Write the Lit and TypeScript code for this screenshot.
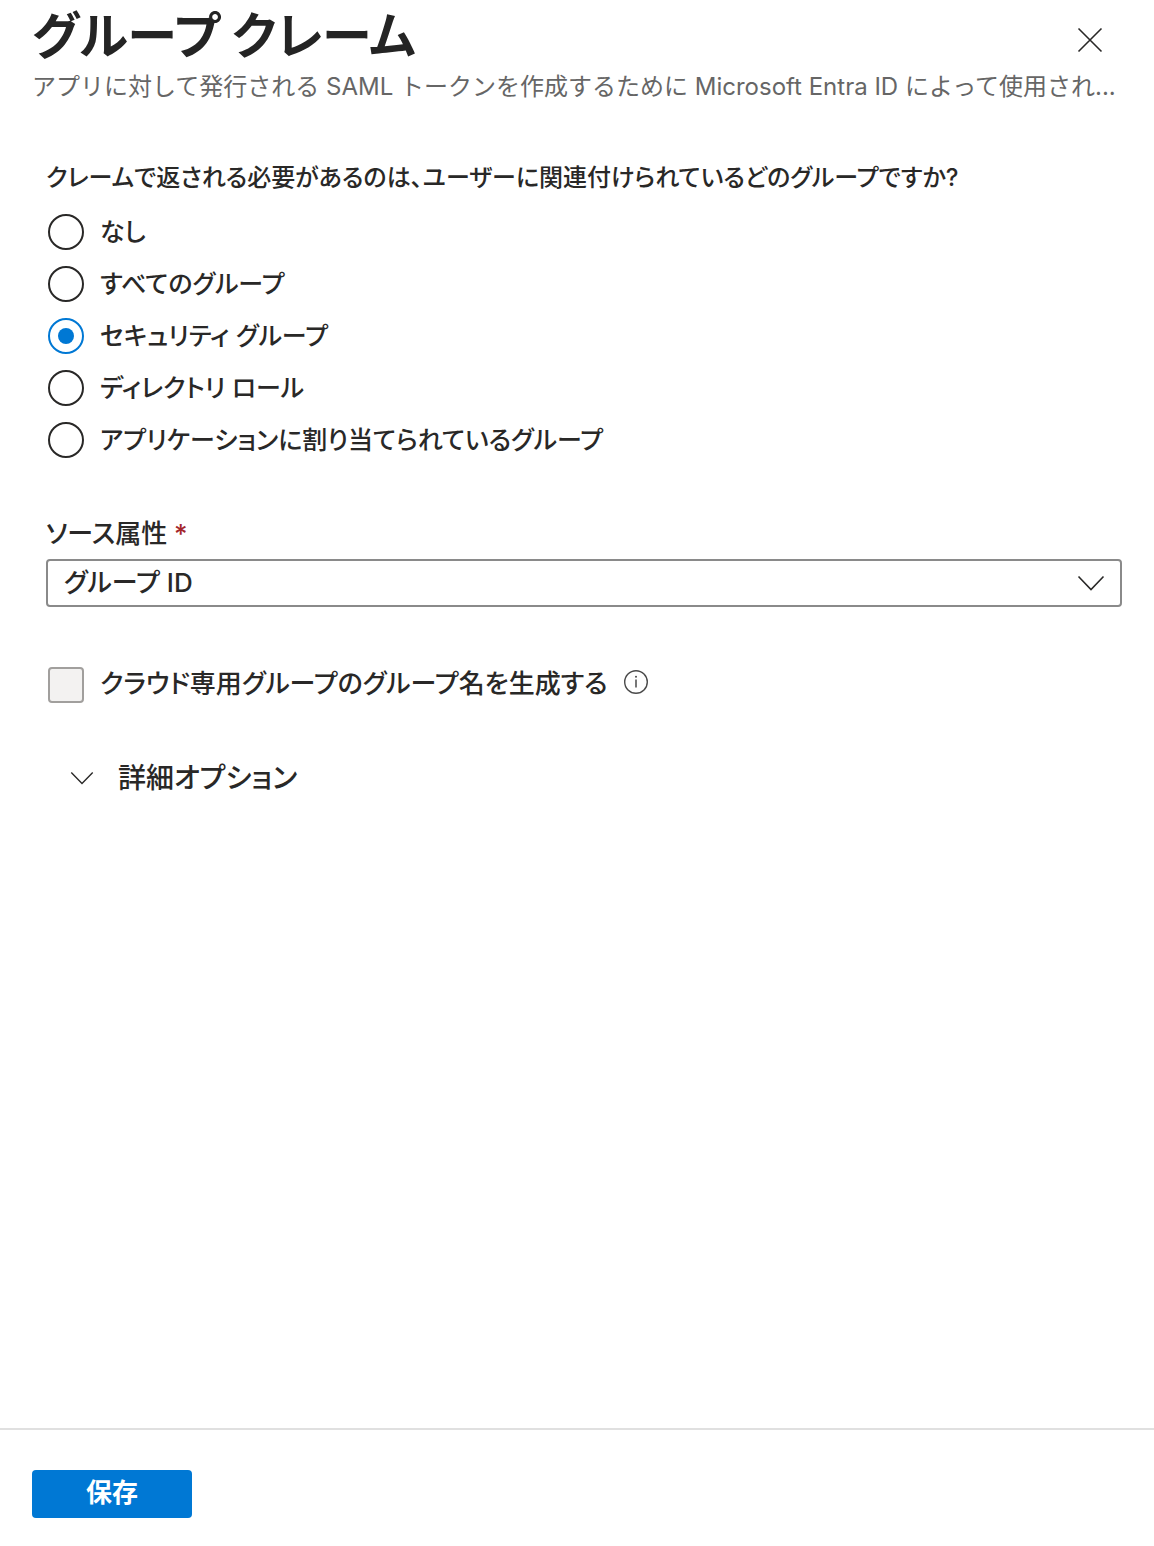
import { LitElement, html, css, svg } from "lit";
import { customElement, state } from "lit/decorators.js";

const GROUP_OPTIONS = [
  { value: "none", label: "なし" },
  { value: "all", label: "すべてのグループ" },
  { value: "security", label: "セキュリティ グループ" },
  { value: "roles", label: "ディレクトリ ロール" },
  { value: "assigned", label: "アプリケーションに割り当てられているグループ" },
];

const chevron = svg`<path d="M1.5 1.5 L14 14.5 L26.5 1.5" fill="none" stroke="currentColor" stroke-width="1.6" />`;

@customElement("app-root")
export class AppRoot extends LitElement {
  @state() private selected = "security";
  @state() private expanded = false;

  static styles = css`
    :host {
      display: flex;
      flex-direction: column;
      min-height: 100vh;
      background: #fff;
      color: #292827;
      font-family: Inter, "Noto Sans CJK JP", sans-serif;
      font-size: 26px;
      line-height: 36px;
    }
    * {
      box-sizing: border-box;
    }
    button,
    select {
      font: inherit;
      color: inherit;
    }
    svg {
      display: block;
    }
    .header {
      padding: 4px 32px 0;
    }
    .title-row {
      display: flex;
      align-items: center;
      justify-content: space-between;
      padding-right: 8px;
    }
    .title {
      margin: 0;
      font-size: 50px;
      line-height: 64px;
      font-weight: 700;
      font-feature-settings: "palt";
      color: #242424;
    }
    .close {
      display: grid;
      place-items: center;
      width: 48px;
      height: 48px;
      padding: 8px 0 0;
      border: 0;
      background: none;
      cursor: pointer;
    }
    .subtitle {
      margin: 0;
      font-size: 24px;
      line-height: 38px;
      color: #666;
    }
    .content {
      flex: 1;
      padding: 54px 32px 32px 46px;
      font-weight: 500;
      font-feature-settings: "palt";
    }
    .groups {
      margin: 0;
      padding: 0;
      border: 0;
    }
    .legend {
      padding: 0;
      font-size: 24px;
    }
    .options {
      display: flex;
      flex-direction: column;
      gap: 16px;
      padding: 18px 2px 0;
      font-size: 25px;
    }
    .option {
      display: flex;
      align-items: center;
      gap: 16px;
    }
    .radio {
      appearance: none;
      flex: none;
      display: grid;
      place-items: center;
      width: 36px;
      height: 36px;
      margin: 0;
      border: 2px solid #292827;
      border-radius: 50%;
      background: #fff;
    }
    .radio:checked {
      border-color: #0078d4;
    }
    .radio:checked::before {
      content: "";
      width: 16px;
      height: 16px;
      border-radius: 50%;
      background: #0078d4;
    }
    .field {
      padding-top: 58px;
    }
    .field-label {
      display: block;
      padding-bottom: 7px;
    }
    .required {
      color: #a4262c;
    }
    .select-box {
      display: grid;
      align-items: center;
    }
    .select {
      grid-area: 1 / 1;
      appearance: none;
      width: 100%;
      height: 48px;
      padding: 0 56px 0 16px;
      border: 2px solid #8a8a8a;
      border-radius: 4px;
      background: #fff;
      font-feature-settings: "palt";
    }
    .select-icon {
      grid-area: 1 / 1;
      justify-self: end;
      margin-right: 17px;
      pointer-events: none;
    }
    .check-row {
      display: flex;
      align-items: flex-start;
      gap: 16px;
      padding: 60px 2px 0;
      line-height: 34px;
    }
    .checkbox {
      appearance: none;
      flex: none;
      width: 36px;
      height: 36px;
      margin: 0;
      border: 2px solid #a19f9d;
      border-radius: 4px;
      background: #f3f2f1;
    }
    .info {
      margin-top: 2px;
    }
    .advanced {
      display: flex;
      align-items: center;
      gap: 24px;
      margin-top: 57px;
      padding: 0 24px;
      border: 0;
      background: none;
      font-size: 28px;
      font-feature-settings: "palt";
      cursor: pointer;
    }
    .footer {
      padding: 40px 32px 28px;
      border-top: 2px solid #e0e0e0;
    }
    .save {
      width: 160px;
      height: 48px;
      padding: 0 0 2px;
      border: 0;
      border-radius: 4px;
      background: #0078d4;
      color: #fff;
      font-weight: 700;
      cursor: pointer;
    }
  `;

  render() {
    return html`
      <header class="header">
        <div class="title-row">
          <h1 class="title">グループ クレーム</h1>
          <button class="close" type="button" aria-label="閉じる">
            <svg width="26" height="26" viewBox="0 0 26 26">
              <path d="M1.5 1.5 L24.5 24.5 M24.5 1.5 L1.5 24.5" fill="none" stroke="#292827" stroke-width="1.6" />
            </svg>
          </button>
        </div>
        <p class="subtitle">アプリに対して発行される SAML トークンを作成するために Microsoft Entra ID によって使用され...</p>
      </header>

      <main class="content">
        <fieldset class="groups">
          <legend class="legend">クレームで返される必要があるのは、ユーザーに関連付けられているどのグループですか?</legend>
          <div class="options">
            ${GROUP_OPTIONS.map(
              (o) => html`
                <label class="option">
                  <input
                    class="radio"
                    type="radio"
                    name="groups"
                    .value=${o.value}
                    .checked=${this.selected === o.value}
                    @change=${() => (this.selected = o.value)}
                  />
                  <span>${o.label}</span>
                </label>
              `
            )}
          </div>
        </fieldset>

        <div class="field">
          <label class="field-label" for="source">ソース属性 <span class="required">*</span></label>
          <div class="select-box">
            <select class="select" id="source" required>
              <option>グループ ID</option>
            </select>
            <svg class="select-icon" width="28" height="16" viewBox="0 0 28 16">${chevron}</svg>
          </div>
        </div>

        <div class="check-row">
          <input class="checkbox" type="checkbox" id="cloud" disabled />
          <label for="cloud">クラウド専用グループのグループ名を生成する</label>
          <svg class="info" width="26" height="26" viewBox="0 0 26 26" role="img" aria-label="情報">
            <circle cx="13" cy="13" r="11.3" fill="none" stroke="#4a4a4a" stroke-width="1.4" />
            <path d="M13 10.5 V18.5" stroke="#4a4a4a" stroke-width="1.5" />
            <circle cx="13" cy="7.8" r="1" fill="#4a4a4a" />
          </svg>
        </div>

        <button
          class="advanced"
          type="button"
          aria-expanded=${this.expanded ? "true" : "false"}
          @click=${() => (this.expanded = !this.expanded)}
        >
          <svg width="24" height="14" viewBox="0 0 28 16">${chevron}</svg>
          <span>詳細オプション</span>
        </button>
      </main>

      <footer class="footer">
        <button class="save" type="button">保存</button>
      </footer>
    `;
  }
}
